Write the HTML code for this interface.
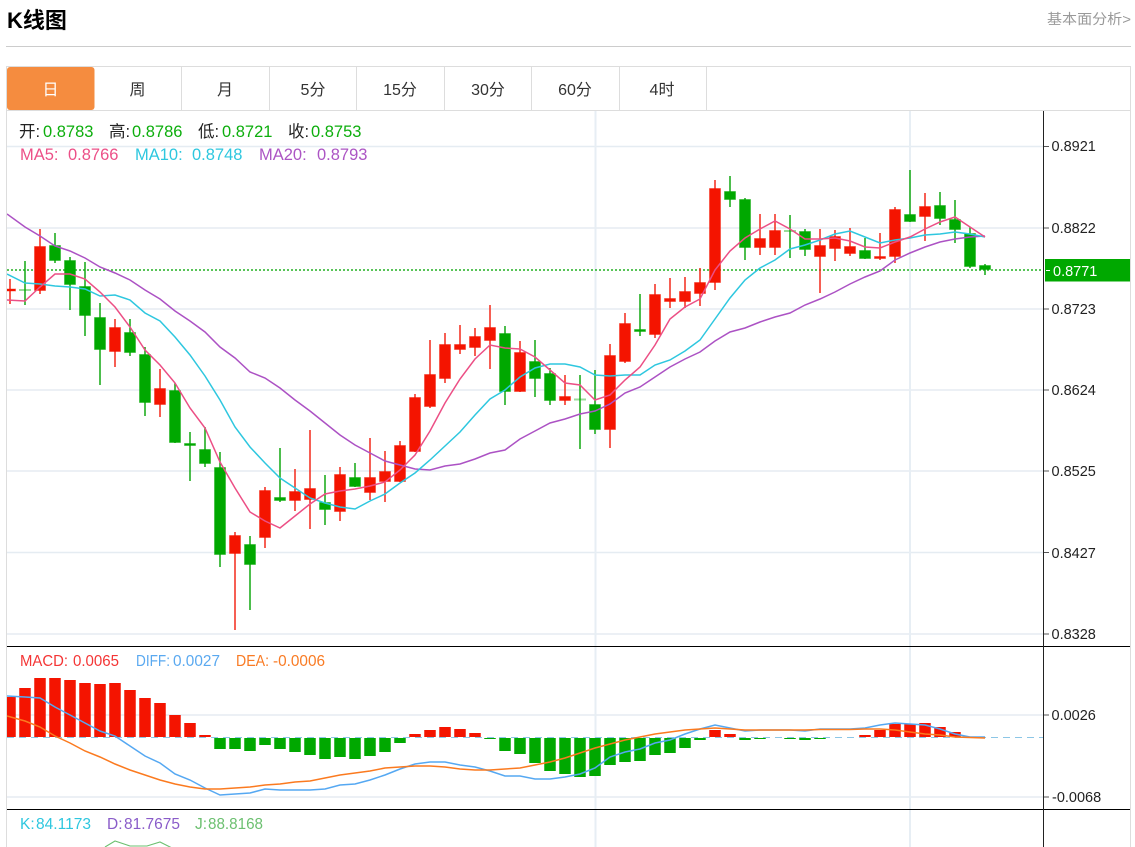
<!DOCTYPE html>
<html><head><meta charset="utf-8"><title>K线图</title>
<style>
html,body{margin:0;padding:0;background:#fff;width:1135px;height:847px;overflow:hidden}
svg{display:block;position:absolute;left:0;top:0}
text{font-family:"Liberation Sans","Noto Sans CJK SC",sans-serif}
</style></head><body>
<svg width="1135" height="847" viewBox="0 0 1135 847" xmlns="http://www.w3.org/2000/svg">
<defs><clipPath id="c"><rect x="7" y="111" width="1036" height="736"/></clipPath></defs>
<text x="7" y="28" font-size="22" font-weight="700" fill="#000">K线图</text>
<rect x="6" y="46" width="1125" height="1" fill="#ccc"/>
<text x="1047" y="24" font-size="14" fill="#999" textLength="84" lengthAdjust="spacingAndGlyphs">基本面分析&gt;</text>

<path d="M6.500 847V66.500H1130.500V847" fill="none" stroke="#ddd" stroke-width="1"/>
<rect x="6" y="110" width="1125" height="1" fill="#ddd"/>
<path d="M181.500 67V110M269.500 67V110M356.500 67V110M444.500 67V110M531.500 67V110M619.500 67V110M706.500 67V110" stroke="#ddd" stroke-width="1" fill="none"/>
<rect x="7" y="67" width="87.500" height="43" rx="3" fill="#F58C3F"/>
<g font-size="16" fill="#333" text-anchor="middle">
<text x="50.500" y="95" fill="#fff">日</text>
<text x="137.500" y="95">周</text>
<text x="225" y="95">月</text>
<text x="313" y="95">5分</text>
<text x="400" y="95">15分</text>
<text x="488" y="95">30分</text>
<text x="575" y="95">60分</text>
<text x="662" y="95">4时</text>
</g>

<!-- grid -->
<path d="M7 146.500H1043M7 228H1043M7 309H1043M7 390H1043M7 471H1043M7 552.500H1043M7 634H1043M7 715H1043M7 797H1043" stroke="#E5ECF2" stroke-width="1.500" fill="none"/>
<path d="M595.500 111V847M910 111V847" stroke="#E7EEF4" stroke-width="2" fill="none"/>

<g clip-path="url(#c)" fill="none">
<!-- dotted current price -->
<path d="M7 270H1043" stroke="#22B022" stroke-width="1.500" stroke-dasharray="2 2"/>
<!-- wicks -->
<path stroke="#F42A1C" stroke-width="1.500" d="M10 279V304M40 229V294M115 319V367M160 369V417M235 532V630M265 487V548M295 469V511M310 430V529M340 467V521M370 438V500M385 451V502M400 441V482M415 394V452M430 340V408M445 333V383M460 325V354M475 328V356M490 305V369M520 341V392M565 375V405M610 344V448M625 313V363M655 284V338M670 278V308M685 277V308M700 268V306M715 180V290M760 214V255M775 214V255M820 229V293M835 230V261M850 228V256M880 233V260M895 207V263M925 193V241"/>
<path stroke="#12A812" stroke-width="1.500" d="M25 261V305M55 233V263M70 257V310M85 262V336M100 303V385M130 319V356M145 347V416M175 383V443M190 432V481M205 427V467M220 452V567M250 536V610M280 448V502M325 475V525M355 463V487M505 326V405M535 340V397M550 368V405M580 375V449M595 370V434M640 294V336M730 176V207M745 198V260M790 215V258M805 229V256M865 238V259M910 170V222M940 192V225M955 200V243M970 227V268M985 264V275"/>
<!-- bodies halo -->
<path stroke="#F41400" stroke-opacity=".4" stroke-width="12" d="M10 288.500V291.500M40 246V291M115 327V352M160 388V405M235 535V554M265 490V538M295 491V501M310 488V500M340 474V512M370 477V493M385 471V482M400 445V482M415 397V452M430 374V407M445 344V379M460 344V350M475 336V348M490 327V341M520 352V392M565 396V401M610 355V430M625 323V362M655 294V335M670 298V302M685 291V302M700 282V294M715 188V283M760 238V248M775 230V248M820 245V257M835 236V249M850 246V254M880 256V259M895 209V257M925 206V217"/>
<path stroke="#00A800" stroke-opacity=".4" stroke-width="12" d="M25 289V291M55 245V261M70 260V285M85 286V316M100 317V350M130 332V353M145 354V403M175 390V443M190 443V446M205 449V464M220 467V555M250 544V565M280 497V501M325 502V510M355 477V487M505 333V392M535 361V379M550 373V401M580 398.500V400.500M595 404V430M640 329V332M730 191V200M745 199V248M790 230V232M805 231V250M865 250V259M910 214V222M940 205V219M955 219V230M970 233V267M985 265V270"/>
<!-- bodies -->
<path stroke="#F41400" stroke-width="11" d="M10 289V291M40 246.500V290.500M115 327.500V351.500M160 388.500V404.500M235 535.500V553.500M265 490.500V537.500M295 491.500V500.500M310 488.500V499.500M340 474.500V511.500M370 477.500V492.500M385 471.500V481.500M400 445.500V481.500M415 397.500V451.500M430 374.500V406.500M445 344.500V378.500M460 344.500V349.500M475 336.500V347.500M490 327.500V340.500M520 352.500V391.500M565 396.500V400.500M610 355.500V429.500M625 323.500V361.500M655 294.500V334.500M670 298.500V301.500M685 291.500V301.500M700 282.500V293.500M715 188.500V282.500M760 238.500V247.500M775 230.500V247.500M820 245.500V256.500M835 236.500V248.500M850 246.500V253.500M880 256.500V258.500M895 209.500V256.500M925 206.500V216.500"/>
<path stroke="#00A800" stroke-width="11" d="M55 245.500V260.500M70 260.500V284.500M85 286.500V315.500M100 317.500V349.500M130 332.500V352.500M145 354.500V402.500M175 390.500V442.500M190 443.500V445.500M205 449.500V463.500M220 467.500V554.500M250 544.500V564.500M280 497.500V500.500M325 502.500V509.500M355 477.500V486.500M505 333.500V391.500M535 361.500V378.500M550 373.500V400.500M595 404.500V429.500M640 329.500V331.500M730 191.500V199.500M745 199.500V247.500M805 231.500V249.500M865 250.500V258.500M910 214.500V221.500M940 205.500V218.500M955 219.500V229.500M970 233.500V266.500M985 265.500V269.500"/>
<!-- MA lines -->
<polyline stroke="#AC52C4" stroke-width="1.500" points="7,214 25,227 40,236 55,246 70,251 85,258 100,267 115,273 130,280 145,290 160,299 175,311 190,321 205,332 220,347 235,358 250,372 265,378 280,388 295,400 310,411 325,423 340,435 355,445 370,453 385,461 400,465 415,469 430,470 445,466 460,464 475,459 490,453 505,450 520,439 535,431 550,423 565,419 580,414 595,411 610,404 625,393 640,387 655,377 670,367 685,359 700,352 715,341 730,332 745,328 760,322 775,317 790,313 805,305 820,299 835,292 850,284 865,277 880,271 895,260 910,253 925,247 940,242 955,239 970,237 985,236"/>
<polyline stroke="#2EC7DF" stroke-width="1.500" points="7,274 25,283 40,284 55,286 70,287 85,289 100,296 115,295 130,300 145,313 160,321 175,337 190,355 205,376 220,400 235,427 250,447 265,463 280,478 295,488 310,498 325,503 340,507 355,509 370,501 385,494 400,483 415,473 430,460 445,446 460,432 475,415 490,399 505,390 520,377 535,368 550,364 565,364 580,367 595,375 610,376 625,375 640,375 655,365 670,360 685,351 700,340 715,319 730,298 745,280 760,268 775,260 790,249 805,245 820,240 835,234 850,231 865,237 880,243 895,240 910,238 925,235 940,234 955,232 970,234 985,237"/>
<polyline stroke="#EC4F85" stroke-width="1.500" points="7,300 25,301 40,287 55,274 70,274 85,279 100,292 115,307 130,327 145,350 160,365 175,383 190,408 205,428 220,462 235,488 250,512 265,521 280,528 295,516 310,504 325,494 340,491 355,489 370,486 385,482 400,470 415,455 430,431 445,403 460,379 475,359 490,345 505,348 520,349 535,357 550,370 565,383 580,385 595,400 610,395 625,380 640,367 655,345 670,319 685,307 700,299 715,270 730,251 745,238 760,229 775,221 790,229 805,239 820,239 835,238 850,241 865,247 880,248 895,242 910,237 925,229 940,222 955,217 970,227 985,237"/>

<!-- MACD zero -->
<path d="M7 737.500H1043" stroke="#8CC6E6" stroke-width="1" stroke-dasharray="7 5"/>
<path stroke="#F41400" stroke-width="11.500" d="M10 697V737M25 688V737M40 678V737M55 678V737M70 680V737M85 683V737M100 684V737M115 683V737M130 690V737M145 698V737M160 703V737M175 715V737M190 723V737M205 735V737M415 734V737M430 730V737M445 727V737M460 729V737M475 733V737M715 730V737M730 734V737M865 735V737M880 730V737M895 724V737M910 724V737M925 723V737M940 727V737M955 732V737"/>
<path stroke="#00A800" stroke-width="11.500" d="M220 738V749M235 738V749M250 738V751M265 738V745M280 738V749M295 738V752M310 738V755M325 738V759M340 738V757M355 738V759M370 738V756M385 738V752M400 738V743M490 738V739M505 738V751M520 738V754M535 738V763M550 738V771M565 738V774M580 738V777M595 738V776M610 738V765M625 738V762M640 738V761M655 738V755M670 738V753M685 738V748M700 738V740M745 738V740M760 738V739M790 738V739M805 738V740M820 738V739"/>
<polyline stroke="#55A8F2" stroke-width="1.500" points="7,696 25,697 40,698 55,707 70,715 85,723 100,731 115,736 130,746 145,756 160,763 175,774 190,780 205,788 220,795 235,794 250,793 265,789 280,790 295,790 310,790 325,789 340,785 355,784 370,780 385,775 400,769 415,764 430,762 445,762 460,765 475,767 490,771 505,776 520,776 535,779 550,779 565,777 580,774 595,768 610,757 625,752 640,749 655,743 670,740 685,734 700,729 715,725 730,728 745,731 760,730 775,730 790,730 805,731 820,729 835,729 850,729 865,728 880,725 895,723 910,724 925,725 940,729 955,734 970,737 985,737"/>
<polyline stroke="#FB7A1F" stroke-width="1.500" points="7,716 25,721 40,727 55,736 70,743 85,751 100,757 115,764 130,770 145,775 160,780 175,784 190,787 205,789 220,789 235,788 250,787 265,785 280,784 295,782 310,781 325,778 340,775 355,773 370,771 385,768 400,767 415,766 430,766 445,767 460,769 475,770 490,770 505,769 520,768 535,765 550,762 565,758 580,753 595,748 610,744 625,740 640,737 655,734 670,732 685,730 700,729 715,728 730,729 745,730 760,730 775,730 790,730 805,730 820,729.500 835,729.500 850,729.500 865,729 880,729 895,730 910,732 925,734 940,735 955,737 970,737.500 985,738"/>
<!-- KDJ J -->
<polyline stroke="#6CC070" stroke-width="1.100" points="105,847 115,841 130,846 147,846 160,842 172,848"/>
</g>

<!-- axis and separators -->
<path d="M7 646.500H1130M7 809.500H1130" stroke="#000" stroke-width="1"/>
<rect x="1043" y="111" width="1" height="736" fill="#222"/>
<path d="M1044 146.500H1049M1044 228H1049M1044 309H1049M1044 390H1049M1044 471H1049M1044 552.500H1049M1044 634H1049M1044 715H1049M1044 797H1049" stroke="#555" stroke-width="1"/>
<rect x="1045" y="259" width="85" height="22.500" fill="#00A800"/>
<path d="M1046 270.500H1050" stroke="#fff" stroke-width="1"/>
<g font-size="14.500" fill="#222">
<text x="1051.500" y="151">0.8921</text>
<text x="1051.500" y="233">0.8822</text>
<text x="1053" y="276" fill="#fff">0.8771</text>
<text x="1051.500" y="314">0.8723</text>
<text x="1051.500" y="395">0.8624</text>
<text x="1051.500" y="476">0.8525</text>
<text x="1051.500" y="558">0.8427</text>
<text x="1051.500" y="639">0.8328</text>
<text x="1051.500" y="720">0.0026</text>
<text x="1052" y="802">-0.0068</text>
</g>

<!-- legends -->
<g font-size="16.500" fill="#222">
<text x="19" y="137">开:</text><text x="109" y="137">高:</text><text x="198" y="137">低:</text><text x="288" y="137">收:</text>
</g>
<g font-size="16.500" fill="#0DAE0D">
<text x="43" y="137">0.8783</text><text x="132" y="137">0.8786</text><text x="222" y="137">0.8721</text><text x="311" y="137">0.8753</text>
</g>
<g font-size="16.500">
<text x="20" y="160" fill="#EC5088">MA5:</text><text x="68" y="160" fill="#EC5088">0.8766</text>
<text x="135" y="160" fill="#2EC7DF">MA10:</text><text x="192" y="160" fill="#2EC7DF">0.8748</text>
<text x="259" y="160" fill="#AC55C4">MA20:</text><text x="317" y="160" fill="#AC55C4">0.8793</text>
</g>
<g font-size="15.500">
<text x="20" y="666" fill="#F43535" textLength="48" lengthAdjust="spacingAndGlyphs">MACD:</text><text x="73" y="666" fill="#F43535" textLength="46" lengthAdjust="spacingAndGlyphs">0.0065</text>
<text x="136" y="666" fill="#5AA9F0" textLength="34" lengthAdjust="spacingAndGlyphs">DIFF:</text><text x="173" y="666" fill="#5AA9F0" textLength="47" lengthAdjust="spacingAndGlyphs">0.0027</text>
<text x="236" y="666" fill="#F97B24" textLength="33" lengthAdjust="spacingAndGlyphs">DEA:</text><text x="273" y="666" fill="#F97B24" textLength="52" lengthAdjust="spacingAndGlyphs">-0.0006</text>
<text x="20" y="829" fill="#2EC7DF">K:</text><text x="36" y="829" fill="#2EC7DF" textLength="55" lengthAdjust="spacingAndGlyphs">84.1173</text>
<text x="107" y="829" fill="#8A5CC9">D:</text><text x="124" y="829" fill="#8A5CC9" textLength="56" lengthAdjust="spacingAndGlyphs">81.7675</text>
<text x="195" y="829" fill="#6CC070">J:</text><text x="208" y="829" fill="#6CC070" textLength="55" lengthAdjust="spacingAndGlyphs">88.8168</text>
</g>
</svg>
</body></html>
